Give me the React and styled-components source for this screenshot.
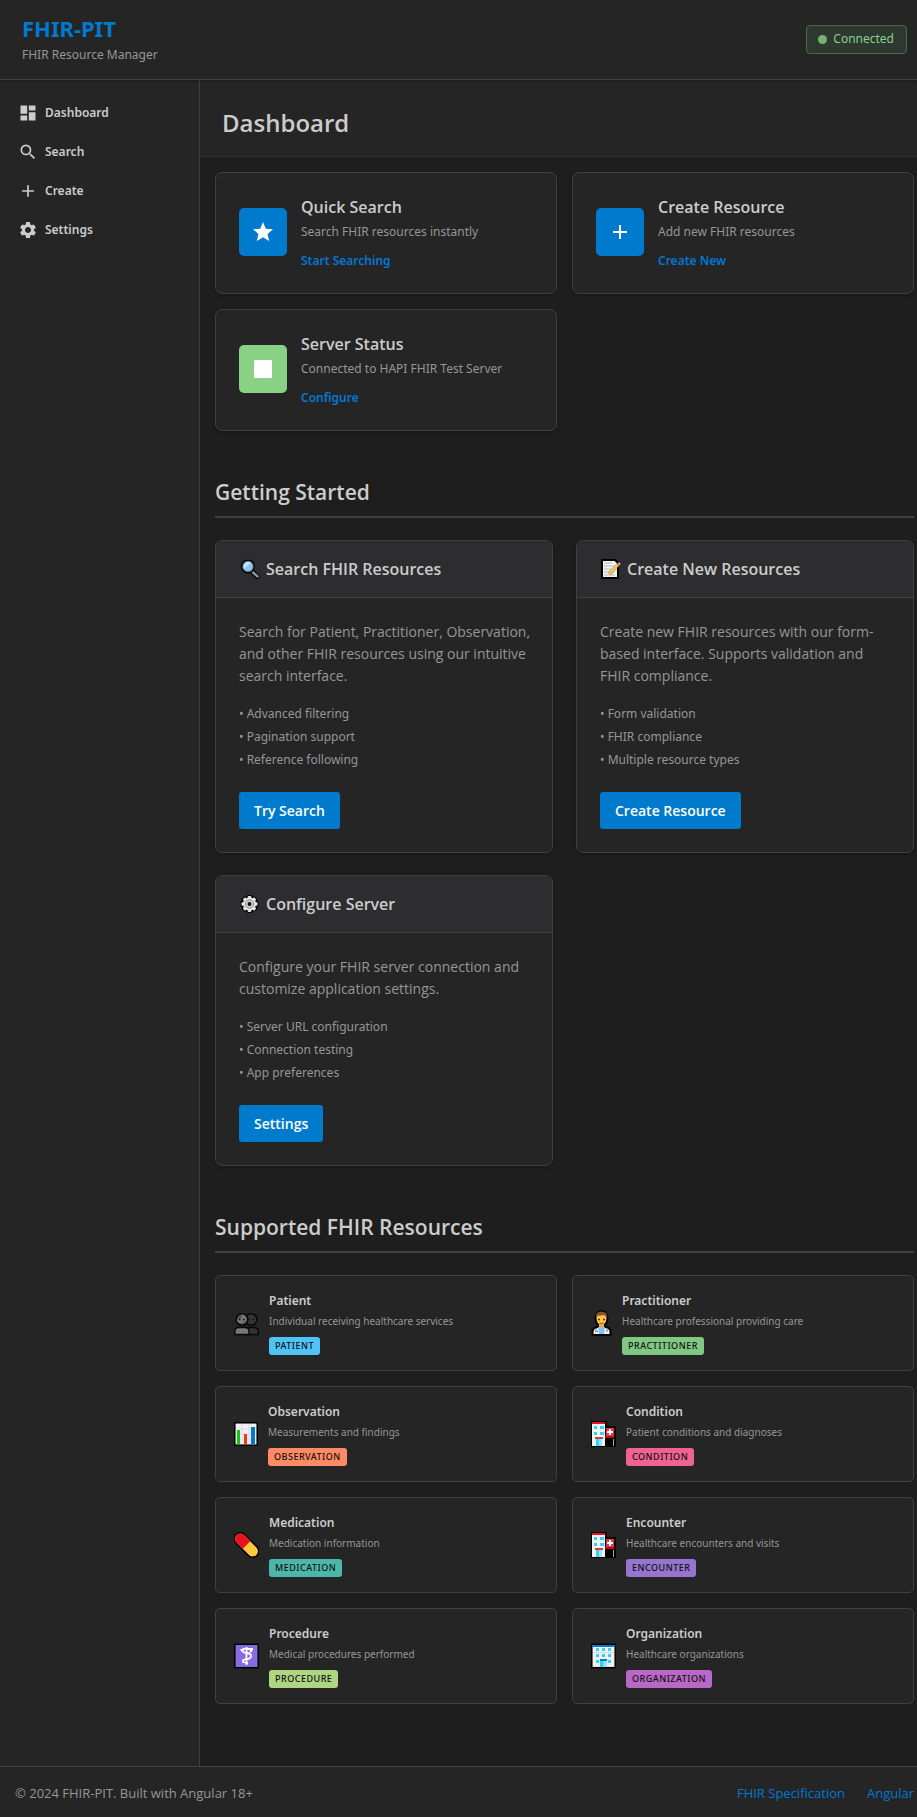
import React from "react";
import styled, { createGlobalStyle } from "styled-components";
import { MdDashboard, MdSearch, MdAdd, MdSettings, MdStar } from "react-icons/md";

const headingFont = `"Open Sans", "Noto Sans", sans-serif`;

const GlobalStyle = createGlobalStyle`
  *, *::before, *::after { box-sizing: border-box; }
  body {
    margin: 0;
    background: #1e1e1e;
    color: #cccccc;
    font-family: "Noto Sans", "Open Sans", sans-serif;
    font-size: 12px;
    line-height: 20px;
  }
  h1, h2, h3, h4, p, ul { margin: 0; padding: 0; }
  ul { list-style: none; }
  a { color: #0078d4; text-decoration: none; }
  svg { display: block; flex: none; }
`;

const Page = styled.div`
  min-height: 100vh;
  display: flex;
  flex-direction: column;
`;

const TopBar = styled.header`
  display: flex;
  align-items: center;
  justify-content: space-between;
  padding: 13px 10px 14px 22px;
  background: #252526;
  border-bottom: 1px solid #404040;
  box-shadow: 0 1px 3px rgba(0, 0, 0, 0.3);
  z-index: 1;
`;

const Brand = styled.p`
  margin-bottom: 2px;
  font-size: 22px;
  line-height: 30px;
  font-weight: 700;
  color: #007acc;
`;

const Tagline = styled.p`
  color: #969696;
`;

const Status = styled.div`
  display: flex;
  align-items: center;
  gap: 6px;
  height: 29px;
  padding: 0 12px 0 11px;
  border: 1px solid #4a6b49;
  border-radius: 4px;
  background: #2f3830;
  color: #89d185;
`;

const Dot = styled.span`
  width: 9px;
  height: 9px;
  border-radius: 50%;
  background: #76b373;
`;

const Body = styled.div`
  flex: 1;
  display: flex;
`;

const Sidebar = styled.nav`
  flex: none;
  width: 200px;
  padding-top: 13px;
  background: #252526;
  border-right: 1px solid #404040;
`;

const NavLink = styled.a`
  display: flex;
  align-items: center;
  gap: 7px;
  height: 39px;
  padding: 0 18px;
  font-weight: 600;
  color: #cccccc;
`;

const Main = styled.main`
  flex: 1;
  min-width: 0;
`;

const PageHeader = styled.div`
  padding: 27px 22px 17px;
  background: #252526;
  border-bottom: 1px solid #2d2d30;
`;

const PageTitle = styled.h1`
  font-family: ${headingFont};
  font-size: 24px;
  line-height: 32px;
  font-weight: 600;
`;

const Content = styled.div`
  padding: 15px 3px 60px 15px;
`;

const Grid = styled.div`
  display: grid;
  grid-template-columns: 1fr 1fr;
  gap: ${(p) => p.$gap || "15px"};
  align-items: start;
`;

const Section = styled.section`
  margin-top: 45px;
`;

const SectionTitle = styled.h2`
  margin-bottom: 22px;
  padding: 1px 0 9px;
  border-bottom: 2px solid #404040;
  font-family: ${headingFont};
  font-size: 21px;
  line-height: 30px;
  font-weight: 600;
`;

const Card = styled.article`
  background: #252526;
  border: 1px solid #404040;
  border-radius: 7px;
`;

const QuickCard = styled(Card)`
  display: flex;
  align-items: center;
  gap: 14px;
  padding: 23px 23px 22px;
  box-shadow: 0 1px 3px rgba(0, 0, 0, 0.3);
`;

const IconTile = styled.div`
  flex: none;
  display: grid;
  place-items: center;
  width: 48px;
  height: 48px;
  margin-bottom: 3px;
  border-radius: 5px;
  background: ${(p) => p.$color};
  color: #ffffff;
`;

const CardTitle = styled.h3`
  font-family: ${headingFont};
  font-size: 16px;
  line-height: 22px;
  font-weight: 600;
`;

const QuickText = styled.p`
  margin: 4px 0 9px;
  color: #969696;
`;

const QuickLink = styled.a`
  display: block;
  font-weight: 600;
`;

const GuideCard = styled(Card)`
  overflow: hidden;
  box-shadow: 0 1px 3px rgba(0, 0, 0, 0.3);
`;

const GuideHeader = styled.div`
  display: flex;
  align-items: center;
  gap: 3px;
  padding: 17px 23px;
  background: #2d2d30;
  border-bottom: 1px solid #404040;
`;

const GuideBody = styled.div`
  padding: 23px 18px 23px 23px;
  color: #969696;
`;

const GuideText = styled.p`
  font-family: ${headingFont};
  font-size: 14px;
  line-height: 22px;
`;

const Features = styled.ul`
  margin: 15px 0 21px;
  line-height: 23px;

  li::before { content: "• "; }
`;

const Button = styled.button`
  display: block;
  height: 37px;
  padding: 0 15px;
  border: 0;
  border-radius: 3px;
  background: #007acc;
  color: #ffffff;
  font-family: ${headingFont};
  font-size: 14px;
  font-weight: 600;
`;

const ResourceCard = styled(Card)`
  display: flex;
  align-items: center;
  gap: 10px;
  padding: 16px 18px 15px;
  border-radius: 5px;

  > svg { margin-bottom: 2px; }
`;

const ResourceName = styled.h4`
  font-size: 12px;
  line-height: 18px;
  font-weight: 600;
`;

const ResourceText = styled.p`
  margin: 3px 0 8px;
  font-size: 10px;
  line-height: 16px;
  color: #969696;
`;

const Tag = styled.span`
  display: block;
  width: fit-content;
  padding: 0 6px;
  border-radius: 3px;
  background: ${(p) => p.$color};
  color: #111111;
  font-size: 9px;
  line-height: 18px;
  font-weight: 500;
  letter-spacing: 0.5px;
  text-transform: uppercase;
`;

const Footer = styled.footer`
  display: flex;
  justify-content: space-between;
  padding: 16px 3px 14px 15px;
  background: #252526;
  border-top: 1px solid #404040;
  color: #969696;
  font-family: ${headingFont};
  font-size: 13px;
`;

const FooterLinks = styled.div`
  display: flex;
  gap: 22px;
`;

const Magnifier = () => (
  <svg width="24" height="22" viewBox="0 0 24 22" aria-hidden="true">
    <path d="M14 14.500l4 4" stroke="#000" strokeWidth="5" strokeLinecap="round" />
    <circle cx="9" cy="8.500" r="6" fill="#9fd0f5" stroke="#000" strokeWidth="2" />
    <circle cx="9" cy="8.500" r="5.200" fill="#8cc4f0" stroke="#50707f" strokeWidth="1" />
    <path d="M5 11a5 5 0 0 1 7-6.500z" fill="#c5e4fb" />
    <path d="M14 14.500l4.500 4" stroke="#8b9295" strokeWidth="2.500" strokeLinecap="round" />
  </svg>
);

const Memo = () => (
  <svg width="24" height="22" viewBox="0 0 24 22" aria-hidden="true">
    <path d="M2 2h13l3 3v15H2z" fill="#f1f1f1" stroke="#000" strokeWidth="2" strokeLinejoin="round" />
    <path d="M4 5h8M4 8h10M4 11h7M4 14h10M4 17h11" stroke="#b9b9b9" />
    <path d="M9 16L20 5" stroke="#000" strokeWidth="4" opacity="0.250" />
    <path d="M9 16L18 7" stroke="#f8c23c" strokeWidth="2.500" />
    <path d="M18 7l2-2" stroke="#e8918f" strokeWidth="2.500" />
  </svg>
);

const Gear = () => (
  <svg width="24" height="22" viewBox="0 0 24 22" aria-hidden="true">
    <g transform="translate(10.500 11)">
      <circle r="8" fill="#000" />
      {[0, 45, 90, 135].map((a) => (
        <rect key={a} x="-3" y="-9" width="6" height="18" rx="2" transform={`rotate(${a})`} />
      ))}
      <circle r="6.500" fill="#e4e4e4" />
      {[0, 45, 90, 135].map((a) => (
        <rect key={a} x="-1.800" y="-8" width="3.600" height="16" rx="1" fill="#e4e4e4" transform={`rotate(${a})`} />
      ))}
      <circle r="4.200" fill="#c9c9c9" stroke="#929292" />
      <circle r="1.900" fill="#111" />
    </g>
  </svg>
);

const People = () => (
  <svg width="25" height="28" viewBox="0 0 25 28" aria-hidden="true">
    <g stroke="#080808" strokeWidth="1.500">
      <circle cx="17" cy="10.500" r="5.800" fill="#343434" />
      <path d="M11 25.500v-3q0-4 4-4h5q4.300 0 4.300 4v3z" fill="#343434" />
      <circle cx="8" cy="10.500" r="5.800" fill="#555" />
      <path d="M.8 25.500v-3q0-4 4-4h6q4.300 0 4.300 4v3z" fill="#777" />
    </g>
    <path d="M8 5.500a5 5 0 0 1 4.500 6L8 14.500q-5 0-5-4 5 0 5-5z" fill="#777" />
    <path d="M5 10.500h1.500M9 10.500h1.500M14.500 10.500H16M18.500 10.500H20" stroke="#111" strokeWidth="1.500" />
  </svg>
);

const Doctor = () => (
  <svg width="21" height="28" viewBox="0 0 21 28" aria-hidden="true">
    <g stroke="#000" strokeWidth="2" strokeLinejoin="round">
      <ellipse cx="10.500" cy="9.500" rx="6" ry="7.500" fill="#ffc83d" />
      <path d="M1.500 26v-3q0-4.500 5-5h8q5 .5 5 5v3z" fill="#f4f4f4" />
    </g>
    <path d="M5 9q-1-6.500 5.500-6.500T16 9q-2-2-3-3-4 1-6 .5Q6 7 5 9z" fill="#8b4f32" />
    <path d="M8 14h5v4H8z" fill="#f5ae28" />
    <path d="M7 18h7l-1 7H8z" fill="#83c3f2" />
    <circle cx="8" cy="10.500" r="1" fill="#402a32" />
    <circle cx="13" cy="10.500" r="1" fill="#402a32" />
    <path d="M8.500 14q2 1 4 0" stroke="#a54e2c" fill="none" />
    <path d="M5 19v3M16 19v4M4 23q1-2 3 0" stroke="#777" fill="none" />
  </svg>
);

const Chart = () => (
  <svg width="24" height="28" viewBox="0 0 24 28" aria-hidden="true">
    <rect x=".8" y="2.800" width="22.400" height="22.400" fill="#f3f1f6" stroke="#000" strokeWidth="1.500" />
    <path d="M2 9h20M2 14h20M2 19h20M8 4v20M15 4v20" stroke="#dddbe1" />
    <path d="M3 10h3v14H3z" fill="#16c60c" />
    <path d="M10 14h3v10h-3z" fill="#f03a17" />
    <path d="M17 7h4v17h-4z" fill="#0078d7" />
  </svg>
);

const Hospital = () => (
  <svg width="25" height="28" viewBox="0 0 25 28" aria-hidden="true">
    <path d="M0 1h16v5h9v21H0z" fill="#000" />
    <path d="M1 4h13v22H1z" fill="#f2f2f2" />
    <path d="M1 2h13v2H1z" fill="#e81224" />
    <path d="M3 6h3v3H3zM9 6h4v3H9zM3 12h3v3H3zM9 12h4v3H9z" fill="#31d2f7" />
    <path d="M4 17h8v2H4z" fill="#e23642" />
    <path d="M5 19h6v7H5z" fill="#31d2f7" />
    <path d="M8 19h3v7H8z" fill="#98e5fb" />
    <path d="M15 8h8v8h-8z" fill="#e83445" />
    <path d="M14 16h9v2h-9z" fill="#b40e20" />
    <path d="M19 9v6M16 12h6" stroke="#fff" strokeWidth="2" />
    <path d="M22.500 19v7" stroke="#aaa" />
  </svg>
);

const Pill = () => (
  <svg width="25" height="28" viewBox="0 0 25 28" aria-hidden="true">
    <g transform="rotate(45 12.500 14)">
      <rect x="-2.300" y="8" width="29.600" height="12" rx="6" fill="#ffc83d" stroke="#000" strokeWidth="1.500" />
      <path d="M12.500 8.800H3.700a5.200 5.200 0 0 0 0 10.400h8.800z" fill="#e81224" />
    </g>
  </svg>
);

const Medical = () => (
  <svg width="25" height="28" viewBox="0 0 25 28" aria-hidden="true">
    <rect x=".8" y="2.300" width="23.400" height="23.400" fill="#886ce4" stroke="#000" strokeWidth="1.500" />
    <g fill="none" stroke="#fff" strokeWidth="1.800">
      <path d="M12.500 5v18" />
      <path d="M19 7h-4q-6-1-7 1 0 2 4 3 5 0 5 3t-5 3q-4 1-3 3 3 1 5 1" />
      <path d="M6.500 7.500l3 1.500M16 10l2-2" />
    </g>
  </svg>
);

const Office = () => (
  <svg width="25" height="28" viewBox="0 0 25 28" aria-hidden="true">
    <rect x=".8" y="2.300" width="23.400" height="23.400" fill="#f0f0f0" stroke="#000" strokeWidth="1.500" />
    <path d="M1.500 3h22v2h-22z" fill="#0078d7" />
    <path d="M2 10.500h21" stroke="#d5d5d5" />
    <path d="M5 6h3v3H5zM11 6h3v3h-3zM17 6h3v3h-3zM5 12h3v3H5zM11 12h3v3h-3zM17 12h3v3h-3zM5 18h3v3H5zM17 18h3v3h-3z" fill="#31d2f7" />
    <path d="M9 19h7v6H9z" fill="#31d2f7" />
    <path d="M12.500 19H16v6h-3.500z" fill="#98e5fb" />
    <path d="M9 17h7v2H9z" fill="#0078d7" />
  </svg>
);

const Block = () => (
  <svg width="24" height="24" viewBox="0 0 24 24" aria-hidden="true">
    <rect x="3" y="3" width="18" height="18" rx="1" fill="currentColor" />
  </svg>
);

const navItems = [
  ["Dashboard", MdDashboard],
  ["Search", MdSearch],
  ["Create", MdAdd],
  ["Settings", MdSettings],
];

const quickCards = [
  { title: "Quick Search", text: "Search FHIR resources instantly", link: "Start Searching", color: "#007acc", icon: <MdStar size={24} /> },
  { title: "Create Resource", text: "Add new FHIR resources", link: "Create New", color: "#007acc", icon: <MdAdd size={24} /> },
  { title: "Server Status", text: "Connected to HAPI FHIR Test Server", link: "Configure", color: "#89d185", icon: <Block /> },
];

const guides = [
  {
    title: "Search FHIR Resources",
    Icon: Magnifier,
    text: "Search for Patient, Practitioner, Observation, and other FHIR resources using our intuitive search interface.",
    features: ["Advanced filtering", "Pagination support", "Reference following"],
    action: "Try Search",
  },
  {
    title: "Create New Resources",
    Icon: Memo,
    text: "Create new FHIR resources with our form-based interface. Supports validation and FHIR compliance.",
    features: ["Form validation", "FHIR compliance", "Multiple resource types"],
    action: "Create Resource",
  },
  {
    title: "Configure Server",
    Icon: Gear,
    text: "Configure your FHIR server connection and customize application settings.",
    features: ["Server URL configuration", "Connection testing", "App preferences"],
    action: "Settings",
  },
];

const resources = [
  ["Patient", "Individual receiving healthcare services", "#4fc3f7", People],
  ["Practitioner", "Healthcare professional providing care", "#81c784", Doctor],
  ["Observation", "Measurements and findings", "#ff8a65", Chart],
  ["Condition", "Patient conditions and diagnoses", "#f06292", Hospital],
  ["Medication", "Medication information", "#4db6ac", Pill],
  ["Encounter", "Healthcare encounters and visits", "#9575cd", Hospital],
  ["Procedure", "Medical procedures performed", "#aed581", Medical],
  ["Organization", "Healthcare organizations", "#ba68c8", Office],
];

export default function App() {
  return (
    <Page>
      <GlobalStyle />
      <TopBar>
        <div>
          <Brand>FHIR-PIT</Brand>
          <Tagline>FHIR Resource Manager</Tagline>
        </div>
        <Status role="status">
          <Dot />
          Connected
        </Status>
      </TopBar>
      <Body>
        <Sidebar aria-label="Main">
          {navItems.map(([label, Icon]) => (
            <NavLink key={label} href="#">
              <Icon size={20} />
              {label}
            </NavLink>
          ))}
        </Sidebar>
        <Main>
          <PageHeader>
            <PageTitle>Dashboard</PageTitle>
          </PageHeader>
          <Content>
            <Grid>
              {quickCards.map((card) => (
                <QuickCard key={card.title}>
                  <IconTile $color={card.color}>{card.icon}</IconTile>
                  <div>
                    <CardTitle>{card.title}</CardTitle>
                    <QuickText>{card.text}</QuickText>
                    <QuickLink href="#">{card.link}</QuickLink>
                  </div>
                </QuickCard>
              ))}
            </Grid>
            <Section>
              <SectionTitle>Getting Started</SectionTitle>
              <Grid $gap="22px 23px">
                {guides.map(({ title, Icon, text, features, action }) => (
                  <GuideCard key={title}>
                    <GuideHeader>
                      <Icon />
                      <CardTitle>{title}</CardTitle>
                    </GuideHeader>
                    <GuideBody>
                      <GuideText>{text}</GuideText>
                      <Features>
                        {features.map((feature) => (
                          <li key={feature}>{feature}</li>
                        ))}
                      </Features>
                      <Button type="button">{action}</Button>
                    </GuideBody>
                  </GuideCard>
                ))}
              </Grid>
            </Section>
            <Section>
              <SectionTitle>Supported FHIR Resources</SectionTitle>
              <Grid>
                {resources.map(([name, text, color, Icon]) => (
                  <ResourceCard key={name}>
                    <Icon />
                    <div>
                      <ResourceName>{name}</ResourceName>
                      <ResourceText>{text}</ResourceText>
                      <Tag $color={color}>{name}</Tag>
                    </div>
                  </ResourceCard>
                ))}
              </Grid>
            </Section>
          </Content>
        </Main>
      </Body>
      <Footer>
        <span>© 2024 FHIR-PIT. Built with Angular 18+</span>
        <FooterLinks>
          <a href="#">FHIR Specification</a>
          <a href="#">Angular</a>
        </FooterLinks>
      </Footer>
    </Page>
  );
}
